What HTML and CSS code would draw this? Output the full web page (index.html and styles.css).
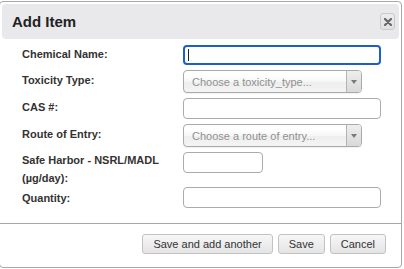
FILE: index.html
```html
<!DOCTYPE html>
<html lang="en">
<head>
    <meta charset="UTF-8">
    <meta name="viewport" content="width=device-width, initial-scale=1.0">
    <title>Add Item</title>
    <link rel="stylesheet" href="styles.css">
</head>
<body>
    <div class="dialog">
        <div class="dialog-titlebar">
            <span class="dialog-title">Add Item</span>
            <button class="dialog-close" title="Close">
                <svg width="8" height="8" viewBox="0 0 8 8"><path d="M1 1L7 7M7 1L1 7" stroke="#666" stroke-width="2.2" stroke-linecap="round"/></svg>
            </button>
        </div>
        <form class="dialog-form">
            <div class="form-row">
                <label class="form-label">Chemical Name:</label>
                <span class="caret-wrap"><input type="text" class="form-input is-focused"></span>
            </div>
            <div class="form-row">
                <label class="form-label label-select">Toxicity Type:</label>
                <div class="chosen-select">
                    <span class="chosen-text">Choose a toxicity_type...</span>
                    <span class="chosen-arrow"><svg width="6" height="4" viewBox="0 0 6 4"><path d="M0 0H6L3 4Z" fill="#7a7a7a"/></svg></span>
                </div>
            </div>
            <div class="form-row">
                <label class="form-label">CAS #:</label>
                <input type="text" class="form-input">
            </div>
            <div class="form-row">
                <label class="form-label label-select">Route of Entry:</label>
                <div class="chosen-select">
                    <span class="chosen-text">Choose a route of entry...</span>
                    <span class="chosen-arrow"><svg width="6" height="4" viewBox="0 0 6 4"><path d="M0 0H6L3 4Z" fill="#7a7a7a"/></svg></span>
                </div>
            </div>
            <div class="form-row row-tall">
                <label class="form-label">Safe Harbor - NSRL/MADL (µg/day):</label>
                <input type="text" class="form-input input-short">
            </div>
            <div class="form-row row-last">
                <label class="form-label label-low">Quantity:</label>
                <input type="text" class="form-input">
            </div>
        </form>
        <div class="dialog-buttonpane">
            <button class="btn">Save and add another</button>
            <button class="btn">Save</button>
            <button class="btn">Cancel</button>
        </div>
    </div>
</body>
</html>
```

FILE: styles.css
```css
* {
    box-sizing: border-box;
}
body {
    margin: 0;
    font-family: 'Liberation Sans', Arial, Helvetica, sans-serif;
    background: #ffffff;
    color: #333;
}
.dialog {
    width: 403px;
    margin: 1px 0 0 -1px;
    border: 1px solid #a8a8a8;
    border-radius: 4px;
    background: #ffffff;
}
.dialog-titlebar {
    display: flex;
    align-items: center;
    justify-content: space-between;
    height: 35px;
    margin: 2px 2px 0 2px;
    padding: 0 4px 0 10px;
    background: #e9e9ec;
    border-radius: 4px;
}
.dialog-title {
    font-size: 15px;
    font-weight: 700;
    color: #222;
}
.dialog-close {
    display: flex;
    align-items: center;
    justify-content: center;
    width: 15px;
    height: 17px;
    padding: 0;
    border: 1px solid #c9c9c9;
    border-radius: 3px;
    background: linear-gradient(#ececec, #e0e0e0);
    cursor: pointer;
}
.dialog-form {
    padding: 6px 0 15px 22px;
}
.form-row {
    display: flex;
    align-items: flex-start;
    margin-bottom: 5px;
}
.row-tall {
    margin-bottom: 0;
}
.row-last {
    margin-bottom: 0;
}
.form-label {
    width: 161px;
    flex-shrink: 0;
    padding-right: 20px;
    font-size: 11px;
    font-weight: 700;
    line-height: 18px;
    color: #333;
}
.label-select {
    padding-top: 1px;
}
.row-tall .form-label {
    line-height: 17.5px;
}
.label-low {
    padding-top: 2px;
}
.form-input {
    display: block;
    width: 198px;
    height: 21px;
    margin: 0;
    padding: 0 6px;
    border: 1px solid #ababab;
    border-radius: 4px;
    background: #fff;
    font-family: inherit;
    font-size: 12px;
    outline: none;
}
.input-short {
    width: 80px;
}
.caret-wrap {
    position: relative;
    display: block;
}
.form-input.is-focused {
    height: 20px;
    border: 2px solid #1b5fca;
    border-radius: 4px;
}
.caret-wrap::after {
    content: '';
    position: absolute;
    left: 5px;
    top: 4px;
    width: 1px;
    height: 12px;
    background: #222;
}
.chosen-select {
    display: flex;
    align-items: center;
    justify-content: space-between;
    width: 179px;
    height: 23px;
    border: 1px solid #aaaaaa;
    border-radius: 4px;
    background: linear-gradient(#ffffff 20%, #f6f6f6 50%, #eeeeee 52%, #f4f4f4 100%);
    box-shadow: 0 1px 1px rgba(0, 0, 0, 0.06);
    overflow: hidden;
}
.chosen-text {
    padding-left: 8px;
    font-size: 11px;
    color: #8f8f8f;
    white-space: nowrap;
}
.chosen-arrow {
    display: flex;
    align-items: center;
    justify-content: center;
    width: 15px;
    height: 100%;
    border-left: 1px solid #b4b4b4;
    background: linear-gradient(#eeeeee, #d9d9d9);
}
.dialog-buttonpane {
    display: flex;
    justify-content: flex-end;
    gap: 5px;
    padding: 10px 15px 13px 0;
    border-top: 1px solid #a8a8a8;
}
.btn {
    height: 20px;
    padding: 0 10px;
    border: 1px solid #c2c2c2;
    border-radius: 3px;
    background: linear-gradient(#f7f7f7, #e4e4e4);
    font-family: inherit;
    font-size: 11px;
    color: #333;
    cursor: pointer;
}
```
